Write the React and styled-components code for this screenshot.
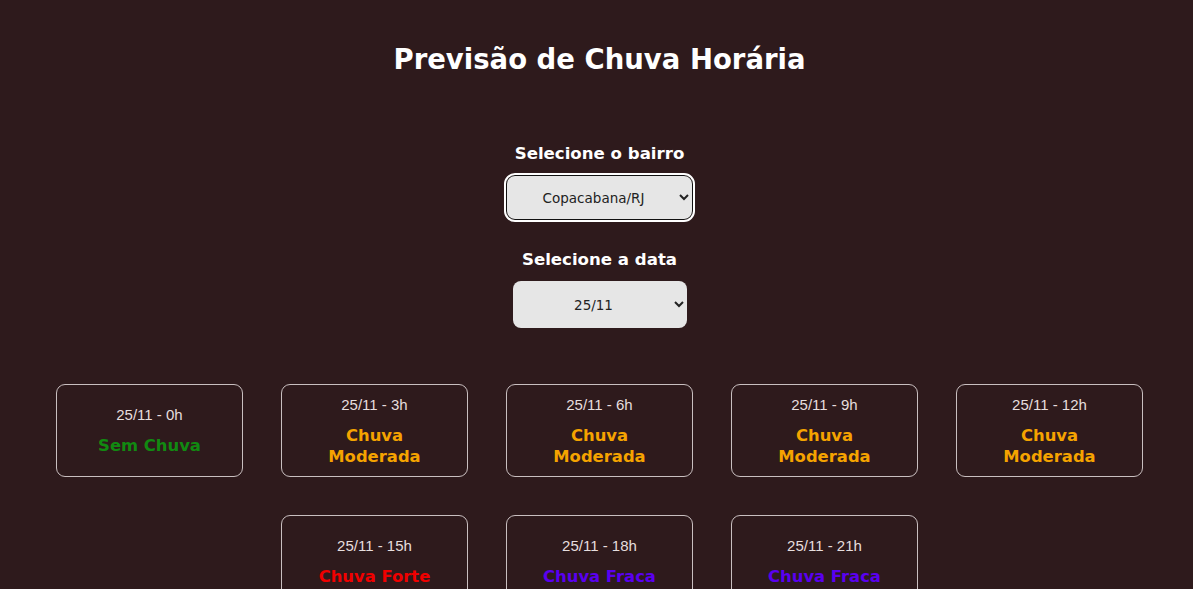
import React from "react";
import styled, { createGlobalStyle } from "styled-components";

const Global = createGlobalStyle`
  html, body { margin: 0; padding: 0; background: #2e1a1c; }
  body { font-family: "DejaVu Sans", "Open Sans", sans-serif; color: #fff; }
`;

const Page = styled.main`
  display: flex;
  flex-direction: column;
  align-items: center;
  padding: 41px 0 40px 6px;
`;

const Title = styled.h1`
  margin: 0 0 66px;
  font-size: 27.5px;
  line-height: 36px;
  font-weight: 700;
  color: #fff;
`;

const Field = styled.div`
  display: flex;
  flex-direction: column;
  align-items: center;
  margin-bottom: ${(p) => p.$mb || 0}px;
`;

const Label = styled.label`
  font-size: 16.6px;
  font-weight: 700;
  line-height: 22px;
  margin-bottom: 10px;
`;

const Select = styled.select`
  width: ${(p) => p.$w}px;
  height: ${(p) => p.$h}px;
  box-sizing: border-box;
  background: #e6e6e6;
  color: #222;
  font-family: inherit;
  font-size: 13.5px;
  text-align: center;
  text-align-last: center;
  border-radius: ${(p) => (p.$focused ? 9 : 8)}px;
  border: ${(p) => (p.$focused ? "1px solid #111" : "none")};
  outline: ${(p) => (p.$focused ? "2px solid #fff" : "none")};
  outline-offset: 0;
  padding: 0 8px;
`;

const Grid = styled.section`
  display: flex;
  flex-wrap: wrap;
  justify-content: center;
  gap: 38px;
  width: 1087px;
`;

const Card = styled.div`
  width: 187px;
  height: 93px;
  box-sizing: border-box;
  border: 1px solid #c9bfc0;
  border-radius: 9px;
  display: flex;
  flex-direction: column;
  align-items: center;
  justify-content: center;
  text-align: center;
`;

const When = styled.div`
  font-family: "Liberation Sans", Arial, sans-serif;
  font-size: 15px;
  line-height: 20px;
  color: #e6dede;
  margin-bottom: 10px;
`;

const Status = styled.div`
  font-size: 16.4px;
  line-height: 21px;
  font-weight: 700;
  color: ${(p) => p.$color};
  padding: 0 24px;
`;

const colors = {
  "Sem Chuva": "#118a11",
  "Chuva Moderada": "#f5a300",
  "Chuva Forte": "#f00000",
  "Chuva Fraca": "#5a00f0",
};

const data = [
  ["0h", "Sem Chuva"],
  ["3h", "Chuva Moderada"],
  ["6h", "Chuva Moderada"],
  ["9h", "Chuva Moderada"],
  ["12h", "Chuva Moderada"],
  ["15h", "Chuva Forte"],
  ["18h", "Chuva Fraca"],
  ["21h", "Chuva Fraca"],
];

export default function App() {
  return (
    <>
      <Global />
      <Page>
        <Title>Previsão de Chuva Horária</Title>
        <Field $mb={29}>
          <Label>Selecione o bairro</Label>
          <Select $w={187} $h={45} $focused defaultValue="Copacabana/RJ">
            <option>Copacabana/RJ</option>
            <option>Ipanema/RJ</option>
            <option>Leblon/RJ</option>
          </Select>
        </Field>
        <Field $mb={56}>
          <Label>Selecione a data</Label>
          <Select $w={174} $h={47} defaultValue="25/11">
            <option>25/11</option>
            <option>26/11</option>
          </Select>
        </Field>
        <Grid>
          {data.map(([h, s]) => (
            <Card key={h}>
              <When>25/11 - {h}</When>
              <Status $color={colors[s]}>{s}</Status>
            </Card>
          ))}
        </Grid>
      </Page>
    </>
  );
}
